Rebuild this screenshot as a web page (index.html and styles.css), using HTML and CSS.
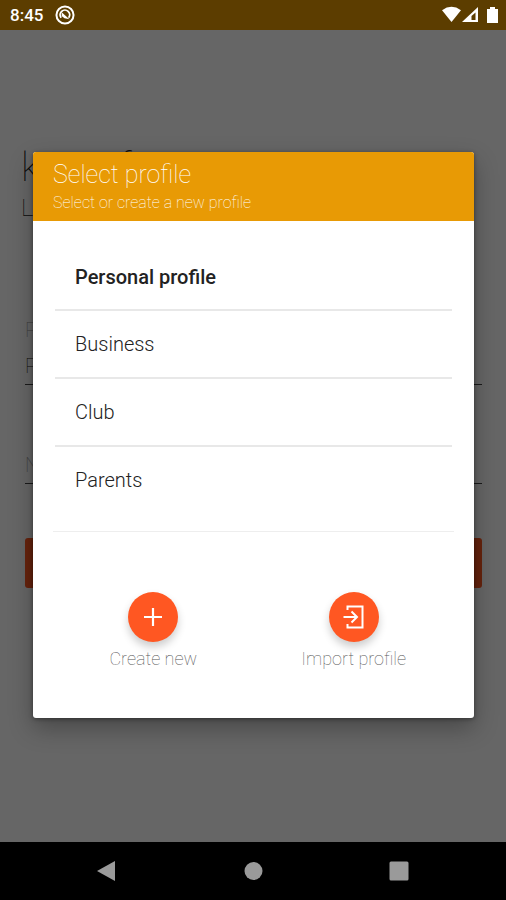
FILE: index.html
```html
<!DOCTYPE html>
<html lang="en">
<head>
<meta charset="utf-8">
<meta name="viewport" content="width=device-width, initial-scale=1">
<title>Select profile</title>
<link rel="stylesheet" href="styles.css">
</head>
<body>
<div class="screen">
  <div class="app">
    <header class="status">
      <span class="clock">8:45</span>
      <svg class="status-app" viewBox="0 0 18 18" aria-hidden="true"><circle cx="9" cy="9" r="7.7" fill="none" stroke="#fff" stroke-width="1.800"/><path d="M5.500 11.500a4.300 4.300 0 1 1 6.800 0" fill="none" stroke="#fff" stroke-width="1.700"/><path d="M6 6.500l7 6.300-4.500-.8-2.500-2z" fill="#fff"/></svg>
      <svg class="status-icons" viewBox="0 0 56 18" aria-hidden="true"><path d="M0 4.200Q9.500-2.500 19 4.200L9.500 16z" fill="#fff"/><path d="M20 16L36 1v15z" fill="#fff"/><path d="M29.500 14v-4l4-3.600V14z" fill="#5c3d00"/><path d="M48 1h5v2h3v14H45V3h3z" fill="#fff"/></svg>
    </header>
    <main class="login">
      <h1 class="brand">konrnf</h1>
      <p class="tagline">Login</p>
      <form class="form">
        <label class="field first"><span>Profile</span><input type="text" value="Personal"></label>
        <label class="field second"><input type="text" placeholder="Name" aria-label="Name"></label>
        <button class="submit" type="button">Login</button>
      </form>
    </main>
    <div class="scrim">
      <section class="dialog" role="dialog" aria-labelledby="dialog-title">
        <header class="dialog-head">
          <h2 id="dialog-title">Select profile</h2>
          <p>Select or create a new profile</p>
        </header>
        <ul class="profiles">
          <li><button class="profile selected" type="button">Personal profile</button></li>
          <li><button class="profile" type="button">Business</button></li>
          <li><button class="profile" type="button">Club</button></li>
          <li><button class="profile" type="button">Parents</button></li>
        </ul>
        <footer class="actions">
          <button class="action" type="button">
            <span class="fab"><svg viewBox="0 0 24 24" aria-hidden="true"><path d="M12 3v18M3 12h18" fill="none" stroke="#fff" stroke-width="2.200"/></svg></span>
            Create new
          </button>
          <button class="action" type="button">
            <span class="fab"><svg viewBox="0 0 24 24" aria-hidden="true"><path d="M5.500 5V1.500h15v21h-15V19M1.500 12h13M9.500 6.500L15 12l-5.500 5.500" fill="none" stroke="#fff" stroke-width="2"/></svg></span>
            Import profile
          </button>
        </footer>
      </section>
    </div>
  </div>
  <nav class="navbar" aria-label="System">
    <button type="button" aria-label="Back"><svg viewBox="0 0 20 22"><path d="M0 11L18 1v20z"/></svg></button>
    <button type="button" aria-label="Home"><svg viewBox="0 0 20 22"><circle cx="10.500" cy="11" r="9"/></svg></button>
    <button type="button" aria-label="Recents"><svg viewBox="0 0 20 22"><rect x="0.500" y="1.500" width="19" height="19" rx="1.500"/></svg></button>
  </nav>
</div>
</body>
</html>
```
FILE: styles.css
```css
* { box-sizing: border-box; }
body {
  margin: 0;
  font-family: Roboto, "Liberation Sans", sans-serif;
  background: #000;
}
button, input { font: inherit; color: inherit; }
button { border: 0; background: none; padding: 0; }
h1, h2, p, ul { margin: 0; padding: 0; font-weight: inherit; }

.screen { min-height: 100vh; display: flex; flex-direction: column; }
.app {
  position: relative;
  flex: 1;
  display: flex;
  flex-direction: column;
  background: #fff;
}
.status {
  position: relative;
  z-index: 2;
  height: 30px;
  display: flex;
  align-items: center;
  gap: 12px;
  padding: 0 8px 0 10px;
  background: #5c3d00;
  color: #fff;
}
.clock { font-size: 17px; line-height: 20px; font-weight: 500; }
.status-app { width: 20px; height: 20px; }
.status-icons { width: 56px; height: 18px; margin-left: auto; }

.login { flex: 1; padding: 114px 24px 0 25px; color: #222; }
.brand { font-size: 40px; line-height: 48px; font-weight: 100; margin-left: -4px; }
.tagline { font-size: 24px; line-height: 32px; font-weight: 100; margin-left: -4px; }
.form { display: flex; flex-direction: column; }
.field { display: flex; flex-direction: column; border-bottom: 1px solid #444; }
.field span { font-size: 20px; line-height: 36px; font-weight: 100; color: #999; }
.field input {
  width: 100%;
  height: 36px;
  border: 0;
  padding: 0;
  background: none;
  font-size: 20px;
  font-weight: 100;
}
.field input::placeholder { color: #999; }
.first { margin-top: 88px; }
.second { margin-top: 62px; }
.submit {
  height: 50px;
  margin-top: 54px;
  border-radius: 3px;
  background: #ff5722;
  color: #fff;
  font-size: 17px;
}

.scrim {
  position: absolute;
  inset: 0;
  display: flex;
  align-items: center;
  justify-content: center;
  padding: 28px 32px 0 33px;
  background: rgba(0, 0, 0, 0.6);
}
.dialog {
  width: 100%;
  overflow: hidden;
  border-radius: 3px;
  background: #fff;
  box-shadow: 0 10px 24px rgba(0, 0, 0, 0.3), 0 1px 4px rgba(0, 0, 0, 0.4);
}
.dialog-head {
  padding: 7px 20px;
  background: #e89a05;
  color: #fff;
  font-weight: 100;
}
.dialog-head h2 { font-size: 25px; line-height: 32px; }
.dialog-head p { font-size: 16px; line-height: 23px; }
.profiles {
  list-style: none;
  margin: 23px 20px 0;
  padding: 0 2px 18px;
  border-bottom: 1px solid #eee;
}
.profiles li + li { border-top: 2px solid #e8e8e8; }
.profile {
  display: block;
  width: 100%;
  padding: 21px 20px;
  text-align: left;
  font-size: 20px;
  line-height: 24px;
  font-weight: 300;
  color: #222;
}
.profiles li:first-child .profile { padding-bottom: 20px; }
.selected { font-weight: 500; color: #222; }
.actions { display: flex; padding: 60px 20px 47px; }
.action {
  flex: 1;
  display: flex;
  flex-direction: column;
  align-items: center;
  gap: 5px;
  font-size: 18px;
  line-height: 24px;
  font-weight: 100;
  color: #555;
}
.fab {
  width: 50px;
  height: 50px;
  display: grid;
  place-items: center;
  border-radius: 50%;
  background: #ff5722;
  box-shadow: 0 5px 8px rgba(0, 0, 0, 0.2);
}
.fab svg { width: 24px; height: 24px; }

.navbar {
  height: 58px;
  display: flex;
  align-items: center;
  justify-content: center;
  gap: 126px;
  background: #000;
}
.navbar svg { display: block; width: 20px; height: 22px; fill: #9a9a9a; }
```
